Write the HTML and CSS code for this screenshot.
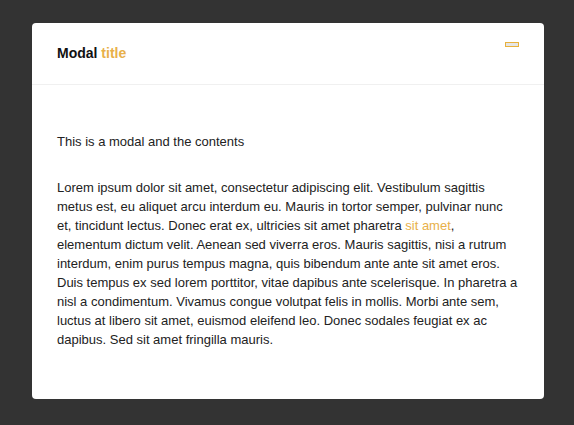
FILE: index.html
```html
<!DOCTYPE html>
<html>
<head>
<meta charset="utf-8">
<link rel="stylesheet" href="styles.css">
</head>
<body>
<div class="modal">
  <div class="modal-header">
    <h1 class="modal-title">Modal <span class="accent">title</span></h1>
    <button class="close" aria-label="Close"></button>
  </div>
  <div class="modal-body">
    <p>This is a modal and the contents</p>
    <p>Lorem ipsum dolor sit amet, consectetur adipiscing elit. Vestibulum sagittis metus est, eu aliquet arcu interdum eu. Mauris in tortor semper, pulvinar nunc et, tincidunt lectus. Donec erat ex, ultricies sit amet pharetra <span class="accent">sit amet</span>, elementum dictum velit. Aenean sed viverra eros. Mauris sagittis, nisi a rutrum interdum, enim purus tempus magna, quis bibendum ante ante sit amet eros. Duis tempus ex sed lorem porttitor, vitae dapibus ante scelerisque. In pharetra a nisl a condimentum. Vivamus congue volutpat felis in mollis. Morbi ante sem, luctus at libero sit amet, euismod eleifend leo. Donec sodales feugiat ex ac dapibus. Sed sit amet fringilla mauris.</p>
  </div>
</div>
</body>
</html>
```
FILE: styles.css
```css
html, body {
  margin: 0;
  padding: 0;
  background: #333333;
  height: 100%;
}
body {
  font-family: "Liberation Sans", Arial, sans-serif;
  color: #222;
  padding-top: 23px;
  box-sizing: border-box;
}
.modal {
  width: 512px;
  margin-left: 32px;
  background: #fff;
  border-radius: 4px;
}
.modal-header {
  display: flex;
  justify-content: space-between;
  align-items: flex-start;
  padding: 20px 25px 21px 25px;
  border-bottom: 1px solid #f0f0f0;
}
.modal-title {
  margin: 0;
  font-size: 14px;
  line-height: 20px;
  font-weight: bold;
  color: #111;
}
.accent {
  color: #e8b04a;
}
.close {
  margin: -1px 0 0 0;
  padding: 0;
  width: 14px;
  height: 5px;
  border: 1px solid #e8b13c;
  background: #e5e5e5;
  border-radius: 0;
}
.modal-body {
  padding: 47px 25px 50px 25px;
  font-size: 13px;
  line-height: 19px;
}
.modal-body p {
  margin: 0 0 27px 0;
}
.modal-body p:last-child {
  margin-bottom: 0;
}
```
